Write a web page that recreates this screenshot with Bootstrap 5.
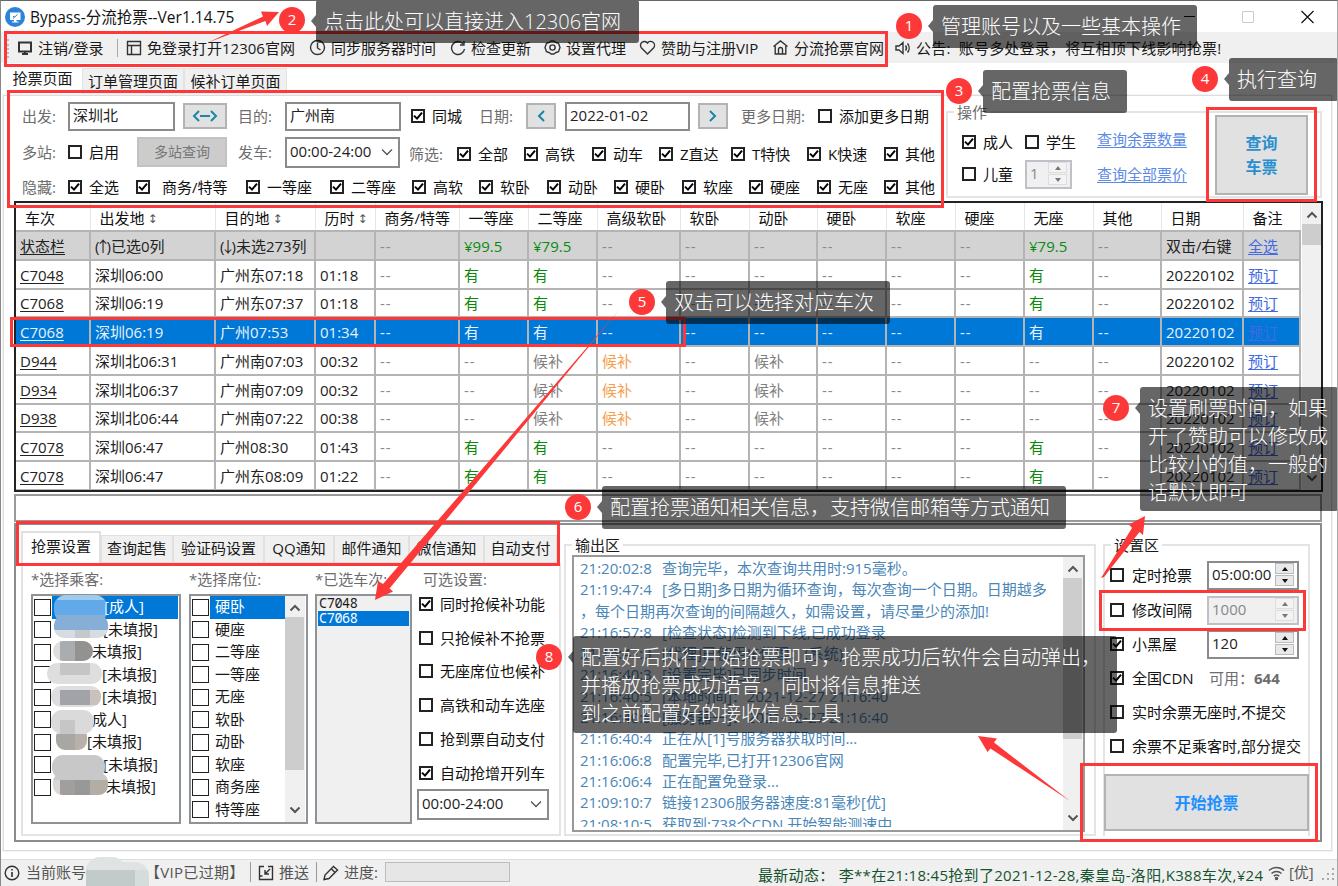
<!DOCTYPE html>
<html lang="zh-CN">
<head>
<meta charset="utf-8">
<meta name="viewport" content="width=device-width, initial-scale=1">
<title>Bypass-分流抢票</title>
<link href="https://cdn.jsdelivr.net/npm/bootstrap@5.3.0/dist/css/bootstrap.min.css" rel="stylesheet">
<style>
:root{--red:#fd3838;--line:#dcdcdc;--face:#f0f0f0}
body{margin:0;background:#fff;font:15px/20px "Open Sans","Noto Sans CJK SC",sans-serif;color:#1a1a1a;overflow:hidden}
.win{width:1338px;height:886px;border-top:1px solid #666;border-left:1px solid #888;border-right:1px solid #aaa;box-sizing:border-box;overflow:hidden;white-space:nowrap}
svg{display:block;flex:none}
.ic{fill:none;stroke:#333;stroke-width:1.4}
.gray{color:#6d6d6d}
/* title and tool bars */
.titlebar{height:31px;padding-left:4px;color:#111}
.titlebar .cap{padding-left:5px;font-size:15.5px}
.winctl{margin-right:18px}
.toolstrip{height:31px;background:var(--face);margin-bottom:1px;display:grid;grid-template-columns:109px 183px 141px 94px 95px 133px 123px 1fr;padding-left:16px;align-items:center;position:relative}
.toolstrip:before{content:"";position:absolute;left:6px;top:7px;bottom:5px;border-left:2px dotted #bbb}
.toolstrip>div{display:flex;align-items:center;gap:5px;height:28px}
.toolstrip>.notice{letter-spacing:.2px}
.toolstrip .sep{width:1px;height:18px;background:#aaa;margin-left:8px}
.tabline{height:31px;padding:4px 0 0 0}
.ttab{height:27px;line-height:24px;background:var(--face);border:1px solid #e2e2e2;text-align:center}
.ttab.on{background:#fff;border:0;line-height:20px;padding-left:2px}
.page{margin:0 5px 0 2px;height:756px;border:1px solid var(--line);outline:1px solid #f3f3f3;padding:0 9px 0 10px}
/* filter area */
.filters{height:105px}
.frows{width:934px;padding-left:8px}
.r1,.r2,.r3{display:grid;align-items:center}
.r1{height:40px;grid-template-columns:46px 115px 55px 47px 126px 68px 47px 39px 133px 43px 77px 120px}
.r2{height:32px;grid-template-columns:46px 69px 101px 47px 124px 48px 67px 68px 67px 72px 76px 77px 60px}
.r3{height:33px;padding-top:5px;grid-template-columns:46px 68px 110px 84px 82px 67px 68px 67px 68px 67px 68px 67px 60px}
.r2>.dn{padding-top:4px}
.ck{display:flex;align-items:center;gap:7px;color:#111}
.form-check-input{width:14px;height:14px;margin:0;border:2px solid #222;border-radius:0!important;background-color:#fff;flex:none}
.form-check-input:checked{background-color:#fff;border-color:#222;background-image:url("data:image/svg+xml,%3Csvg xmlns='http://www.w3.org/2000/svg' viewBox='0 0 10 10'%3E%3Cpath d='M1 4.6 4 7.6 9 1.6' fill='none' stroke='%23000' stroke-width='2'/%3E%3C/svg%3E");background-size:10px 10px}
.form-control{border:2px solid #8b8b8b;border-radius:0;padding:0 3px 3px;height:29px;line-height:22px;font-size:15px;color:#222}
.btn-face{background:#e1e1e1;border:2px solid #b3b3b3;border-radius:0;padding:0;display:flex;align-items:center;justify-content:center;font-size:15px;line-height:20px}
.combo{display:flex;justify-content:space-between;align-items:center;height:31px;padding-right:5px}
.combo svg{margin-top:3px}
.w106{width:107px}.w116{width:116px}.w125{width:125px}.w114{width:115px}
.b44{width:44px;height:26px}.b30{width:30px;height:26px}.b90{width:90px;height:30px;background:#ccc;border-color:#c2c2c2;color:#777;font-size:14px}
/* group boxes */
.gbox{border:2px solid #e4e4e4;position:relative}
.gbox>.cap{position:absolute;top:-11px;left:6px;background:#fff;padding:0 3px;line-height:20px}
.ops{width:376px;height:87px;margin-top:15px;padding:14px 0 0 14px}
.opsg{display:grid;grid-template-columns:63px 72px 118px;grid-template-rows:30px 34px;align-items:center}
.opsg a,.grid a{color:#4169e1;text-underline-offset:2px}
.opsg a{color:#5c8ae6;padding-bottom:6px}
.opsg a:last-child{padding-bottom:0}
.spin{display:flex;justify-content:space-between;align-items:center;padding-right:3px}
.spin.off{background:var(--face);color:#888;border-color:#c0c0c8}
.ud{display:flex;flex-direction:column;gap:1px;padding-top:2px}
.ud i{width:19px;height:11px;background:#e9e9e9;border:1px solid #bbb;display:flex;align-items:center;justify-content:center}
.ud i:before{content:"";border:3px solid transparent;border-bottom:4px solid #111;border-top:0}
.ud i:last-child:before{border-top:4px solid #111;border-bottom:0}
.off .ud i:before{border-bottom-color:#777}.off .ud i:last-child:before{border-top-color:#777}
.off .ud i{background:#f3f3f3;border-color:#ddd}
.bq{width:94px;height:80px;margin:-12px 12px 0 0;color:#2a8fd0;font-weight:700;font-size:16px;line-height:24px}
/* train grid */
.gridbox{height:291px;width:1309px;border:2px solid #222;outline:0;display:flex;overflow:hidden}
.grid{table-layout:fixed;border-collapse:collapse;width:1284px;margin:0 1px 0 0;height:286px}
.grid th{font-weight:400;padding:2px 0 0 9px;border-right:1px solid #e5e5e5;border-bottom:2px solid #b4b4b4;color:#111;overflow:hidden}
.grid td{padding:0 0 0 4px;border-right:2px solid #b4b4b4;border-bottom:2px solid #b4b4b4;color:#222;overflow:hidden;line-height:20px}
.grid thead tr{height:28px}.grid tbody tr{height:29px}.grid tbody tr.s{height:28px}
.grid tr.state td{background:#d3d3d3}
.grid tr.pick td{background:#0078d7;color:#e8f2fb}
.grid .nil{color:#8a8a8a;letter-spacing:1px}.grid .have{color:#0a8a0a}.grid .wait{color:#808080}.grid .hot{color:#f4a050}
.grid .pick .nil,.grid .pick .have{color:#e8f2fb}
.grid td:first-child{text-decoration:underline;text-underline-offset:2px}
.grid .arr{font:12px/12px "DejaVu Sans",sans-serif;color:#555;margin-left:-1px;position:relative;top:-1px}
.grid .ua{margin:0 -4px}
.sb{background:var(--face);width:20px;display:flex;flex-direction:column;align-items:center;justify-content:space-between;padding:8px 0;flex:none;position:relative}
.sb:before{content:"";position:absolute;left:0;right:1px;background:#cdcdcd}
.sbg:before{top:21px;height:21px}.sbl:before{top:21px;height:153px}.sbo:before{top:21px;height:161px}
.memo{height:28px;width:1308px;border:2px solid #999;margin-top:2px}
.lower{height:319px;width:1308px;border:2px solid #8c8c8c;margin-top:1px;padding-left:5px;display:flex}
/* lower tabs */
.conf{width:540px;padding-top:7px}
.conf .strip{height:31px;display:flex;align-items:flex-end}
.conf .strip>div{height:28px;line-height:25px;background:var(--face);border:1px solid #e0e0e0;text-align:center;flex:none}
.conf .strip>.on{height:32px;background:#fff;border:2px solid #e0e0e0;border-bottom:0;line-height:26px}
.confbody{height:273px;border:2px solid #e4e4e4;padding:4px 0 0 8px;display:grid;grid-template-columns:158px 126px 103px 138px}
.confbody .h{height:25px;color:#6d6d6d}
.lst{border:2px solid #8f9297;height:230px;padding:0 1px;position:relative}
.l1{width:150px}.l2{width:119px;display:flex}.l3{width:97px;background:var(--face);font:13.5px/15px "Noto Sans Mono","Liberation Sans",sans-serif}
.li{height:22.5px;display:flex;align-items:center}
.li .form-check-input{width:17px;height:17px;border-width:1.5px}
.li span{height:22.5px;line-height:20px;flex:1;margin-left:1px;padding-left:5px}
.li.on span{background:#0078d7;color:#fff}
.l3 div{padding-left:1px;letter-spacing:-.4px}
.l3 .on{background:#0078d7;color:#fff}
.opt{padding-left:1px}
.opt .h{padding-left:4px;height:18px}
.opt .ck{height:33.8px}
.opt .combo{width:132px;margin:-1px 0 0 -2px}
.out{width:532px;height:292px;margin:19px 0 0 3px;padding:9px 0 0 6px}
.log{width:513px;height:277px;border:2px solid #999;display:flex}
.logtx{flex:1;padding:1px 0 0 6px;overflow:hidden;height:270px}
.logtx div{height:21.3px;line-height:21.3px;color:#4a86b8;display:grid;grid-template-columns:82px 1fr}
.logtx div.full{display:block}
.setg{width:207px;height:292px;margin:19px 0 0 7px;padding:11px 0 0 5px;border-bottom:0}
.sr{display:grid;grid-template-columns:97px 92px;height:34px;align-items:center;white-space:nowrap}
.sr.first{height:36px}
.setg .ck{gap:8px}
.go{width:205px;height:57px;color:#1e90ff;font-weight:700;font-size:16px;margin:11px 0 0 -6px;position:relative}
/* status bar */
.status{height:27px;margin-top:8px;background:var(--face);border-top:1px solid #ddd;color:#555;display:flex;align-items:center;padding-left:3px}
.status .sep{width:1px;height:20px;background:#999}
.status>span{margin-top:-2px}
.prog{width:125px;height:20px;background:#e6e6e6;border:1px solid #bcbcbc;margin:-2px 0 0 7px}
.status .news{color:#14532d;margin:4px 4px 0 248px;width:506px;letter-spacing:.31px}
/* annotation layer */
.note,.pin,.frame,.ink,.blur{position:absolute}
.frame{border:3px solid var(--red)}
.pin{width:26px;height:26px;border-radius:50%;background:var(--red);color:#fff;text-align:center;line-height:24px;font-size:15px}
.note{background:rgba(0,0,0,.6);color:#fff;border-radius:3px;font-size:20px;line-height:28px;padding:8px 0 0 8px;height:43px;white-space:nowrap;font-weight:300}
.note:before{content:"";position:absolute;left:-5px;border:6px solid transparent;border-right:5px solid rgba(0,0,0,.6);border-left:0;top:15px}
</style>
</head>
<body>
<div class="win position-relative">
  <header class="titlebar d-flex align-items-center">
    <svg width="20" height="20" viewBox="0 0 20 20"><circle cx="10" cy="10" r="10" fill="#2d83d5"/><path d="M5 5.500h10.500v7.500H5z" fill="#fff"/><path d="M9 13h2.500v1.500h2v1h-6.500v-1h2z" fill="#fff"/><path d="m8 11.500 4.500-4M8 9.500h1.500" stroke="#2d83d5" fill="none"/></svg>
    <span class="cap">Bypass-分流抢票--Ver1.14.75</span>
    <svg class="ms-auto winctl" width="140" height="16" viewBox="0 0 140 16"><path d="M5 7.500h11" stroke="#111"/><path d="M63.500 2.500h11v11h-11z" fill="none" stroke="#ccc"/><path d="m122.500 2 12 12m0-12-12 12" stroke="#111" stroke-width="1.2"/></svg>
  </header>
  <nav class="toolstrip">
    <div><svg width="16" height="16" class="ic"><path d="M2 2.500h12v9H2zM5 14h6M8 11.500V14" stroke-width="2"/></svg>注销/登录<span class="sep"></span></div>
    <div><svg width="16" height="16" class="ic"><path d="M1.500 1.500h13v13h-13zM1.500 5.500h13M5.500 5.500v9"/></svg>免登录打开12306官网</div>
    <div><svg width="17" height="17" class="ic"><circle cx="8.500" cy="8.500" r="7"/><path d="M8.500 4v5l3 2"/></svg>同步服务器时间</div>
    <div><svg width="16" height="16" class="ic"><path d="M13 3.800A6.500 6.500 0 1 0 14.500 9M14 1v4h-4"/></svg>检查更新</div>
    <div><svg width="17" height="17" class="ic" viewBox="0 0 17 17"><path d="M5 3.500 7.200 2h2.600L12 3.500l2.500.8 1.500 4.200-1.500 4.200-2.500.8L9.800 15H7.200L5 13.500l-2.500-.8L1 8.500l1.500-4.200z"/><circle cx="8.500" cy="8.500" r="2.600"/></svg>设置代理</div>
    <div><svg width="17" height="17" class="ic"><path d="M8.500 15 2.300 8.800A3.800 3.800 0 0 1 8.500 4a3.800 3.800 0 0 1 6.200 4.800z"/></svg>赞助与注册VIP</div>
    <div><svg width="17" height="17" class="ic"><path d="m1.500 7.500 7-5.500 7 5.500M3.200 7v8h10.600V7M6.500 15v-4.500a2 2 0 0 1 4 0V15"/></svg>分流抢票官网</div>
    <div class="notice"><svg width="16" height="16" class="ic"><path d="M1 6h3l4-3.500v11L4 10H1zM10.500 5.500a4 4 0 0 1 0 5M12.500 3.500a7 7 0 0 1 0 9"/></svg>公告:&nbsp; 账号多处登录，将互相顶下线影响抢票!</div>
  </nav>
  <div class="tabline d-flex">
    <div class="ttab on" style="width:81px">抢票页面</div><div class="ttab" style="width:102px">订单管理页面</div><div class="ttab" style="width:103px">候补订单页面</div>
  </div>

  <main class="page">
    <section class="filters d-flex">
      <div class="frows">
        <div class="r1">
          <span class="gray">出发:</span><div class="form-control w106">深圳北</div>
          <button class="btn btn-face b44"><svg width="26" height="14" fill="none" stroke="#1a86a8" stroke-width="2"><path d="M7 2 2 7l5 5M19 2l5 5-5 5M8 7h10"/></svg></button>
          <span class="gray">目的:</span><div class="form-control w116">广州南</div>
          <label class="ck"><input type="checkbox" class="form-check-input" checked>同城</label>
          <span class="gray">日期:</span>
          <button class="btn btn-face b30"><svg width="10" height="14" fill="none" stroke="#1a86a8" stroke-width="2"><path d="M8 2 3 7l5 5"/></svg></button>
          <div class="form-control w125">2022-01-02</div>
          <button class="btn btn-face b30"><svg width="10" height="14" fill="none" stroke="#1a86a8" stroke-width="2"><path d="m2 2 5 5-5 5"/></svg></button>
          <span class="gray">更多日期:</span><label class="ck"><input type="checkbox" class="form-check-input">添加更多日期</label>
        </div>
        <div class="r2">
          <span class="gray">多站:</span><label class="ck"><input type="checkbox" class="form-check-input">启用</label>
          <button class="btn btn-face b90">多站查询</button>
          <span class="gray">发车:</span><div class="form-control combo w114">00:00-24:00<svg width="12" height="8" fill="none" stroke="#555" stroke-width="1.300"><path d="m1 1.500 5 5 5-5"/></svg></div>
          <span class="gray dn">筛选:</span>
          <label class="ck dn"><input type="checkbox" class="form-check-input" checked>全部</label>
          <label class="ck dn"><input type="checkbox" class="form-check-input" checked>高铁</label>
          <label class="ck dn"><input type="checkbox" class="form-check-input" checked>动车</label>
          <label class="ck dn"><input type="checkbox" class="form-check-input" checked>Z直达</label>
          <label class="ck dn"><input type="checkbox" class="form-check-input" checked>T特快</label>
          <label class="ck dn"><input type="checkbox" class="form-check-input" checked>K快速</label>
          <label class="ck dn"><input type="checkbox" class="form-check-input" checked>其他</label>
        </div>
        <div class="r3">
          <span class="gray">隐藏:</span>
          <label class="ck"><input type="checkbox" class="form-check-input" checked>全选</label>
          <label class="ck" style="gap:12px"><input type="checkbox" class="form-check-input" checked>商务/特等</label>
          <label class="ck"><input type="checkbox" class="form-check-input" checked>一等座</label>
          <label class="ck"><input type="checkbox" class="form-check-input" checked>二等座</label>
          <label class="ck"><input type="checkbox" class="form-check-input" checked>高软</label>
          <label class="ck"><input type="checkbox" class="form-check-input" checked>软卧</label>
          <label class="ck"><input type="checkbox" class="form-check-input" checked>动卧</label>
          <label class="ck"><input type="checkbox" class="form-check-input" checked>硬卧</label>
          <label class="ck"><input type="checkbox" class="form-check-input" checked>软座</label>
          <label class="ck"><input type="checkbox" class="form-check-input" checked>硬座</label>
          <label class="ck"><input type="checkbox" class="form-check-input" checked>无座</label>
          <label class="ck"><input type="checkbox" class="form-check-input" checked>其他</label>
        </div>
      </div>
      <div class="gbox ops d-flex justify-content-between flex-shrink-0">
        <span class="cap gray">操作</span>
        <div class="opsg">
          <label class="ck"><input type="checkbox" class="form-check-input" checked>成人</label>
          <label class="ck"><input type="checkbox" class="form-check-input">学生</label>
          <a href="#">查询余票数量</a>
          <label class="ck"><input type="checkbox" class="form-check-input">儿童</label>
          <div class="form-control spin off" style="width:47px">1<span class="ud"><i></i><i></i></span></div>
          <a href="#">查询全部票价</a>
        </div>
        <button class="btn btn-face bq">查询<br>车票</button>
      </div>
    </section>

    <section class="gridbox">
      <table class="grid">
        <colgroup id="cols"></colgroup>
        <thead><tr id="head"></tr></thead>
        <tbody id="rows"></tbody>
      </table>
      <div class="sb sbg"><svg width="12" height="8" fill="none" stroke="#555" stroke-width="2"><path d="m1.500 6.500 4.500-4.500 4.500 4.500"/></svg><svg width="12" height="8" fill="none" stroke="#555" stroke-width="2"><path d="m1.500 1.500 4.500 4.500 4.500-4.500"/></svg></div>
    </section>
    <div class="memo"></div>

    <section class="lower">
      <div class="conf">
        <div class="strip">
          <div class="on" style="width:80px">抢票设置</div><div style="width:72px">查询起售</div><div style="width:91px">验证码设置</div><div style="width:70px">QQ通知</div><div style="width:75px">邮件通知</div><div style="width:75px">微信通知</div><div style="width:73px">自动支付</div>
        </div>
        <div class="confbody">
          <div><div class="h">*选择乘客:</div>
            <div class="lst l1" id="pax"></div>
          </div>
          <div><div class="h">*选择席位:</div>
            <div class="lst l2"><div class="flex-fill" id="seats"></div>
              <div class="sb sbl"><svg width="12" height="8" fill="none" stroke="#555" stroke-width="2"><path d="m1.500 6.500 4.500-4.500 4.500 4.500"/></svg><svg width="12" height="8" fill="none" stroke="#555" stroke-width="2"><path d="m1.500 1.500 4.500 4.500 4.500-4.500"/></svg></div></div>
          </div>
          <div><div class="h">*已选车次:</div><div class="lst l3"><div>C7048</div><div class="on">C7068</div></div></div>
          <div class="opt"><div class="h">可选设置:</div>
            <label class="ck"><input type="checkbox" class="form-check-input" checked>同时抢候补功能</label>
            <label class="ck"><input type="checkbox" class="form-check-input">只抢候补不抢票</label>
            <label class="ck"><input type="checkbox" class="form-check-input">无座席位也候补</label>
            <label class="ck"><input type="checkbox" class="form-check-input">高铁和动车选座</label>
            <label class="ck"><input type="checkbox" class="form-check-input">抢到票自动支付</label>
            <label class="ck"><input type="checkbox" class="form-check-input" checked>自动抢增开列车</label>
            <div class="form-control combo">00:00-24:00<svg width="12" height="8" fill="none" stroke="#555" stroke-width="1.300"><path d="m1 1.500 5 5 5-5"/></svg></div>
          </div>
        </div>
      </div>
      <div class="gbox out"><span class="cap">输出区</span>
        <div class="log">
          <div class="logtx">
            <div><span>21:20:02:8</span><span>查询完毕，本次查询共用时:915毫秒。</span></div>
            <div><span>21:19:47:4</span><span>[多日期]多日期为循环查询，每次查询一个日期。日期越多</span></div>
            <div class="full">，每个日期再次查询的间隔越久，如需设置，请尽量少的添加!</div>
            <div><span>21:16:57:8</span><span>[检查状态]检测到下线,已成功登录</span></div>
            <div><span>21:16:47:3</span><span>[代理]已使用IE代理：(系统)</span></div>
            <div><span>21:16:40:3</span><span>[设置完毕]已同步时间</span></div>
            <div><span>21:16:40:5</span><span>[本地时间]：2021-12-27 21:16:40</span></div>
            <div><span>21:16:40:5</span><span>[服务器一]：2021-12-27 21:16:40</span></div>
            <div><span>21:16:40:4</span><span>正在从[1]号服务器获取时间...</span></div>
            <div><span>21:16:06:8</span><span>配置完毕,已打开12306官网</span></div>
            <div><span>21:16:06:4</span><span>正在配置免登录...</span></div>
            <div><span>21:09:10:7</span><span>链接12306服务器速度:81毫秒[优]</span></div>
            <div><span>21:08:10:5</span><span>获取到:738个CDN,开始智能测速中</span></div>
          </div>
          <div class="sb sbo"><svg width="12" height="8" fill="none" stroke="#555" stroke-width="2"><path d="m1.500 6.500 4.500-4.500 4.500 4.500"/></svg><svg width="12" height="8" fill="none" stroke="#555" stroke-width="2"><path d="m1.500 1.500 4.500 4.500 4.500-4.500"/></svg></div>
        </div>
      </div>
      <div class="gbox setg"><span class="cap">设置区</span>
        <div class="sr first"><label class="ck"><input type="checkbox" class="form-check-input">定时抢票</label><div class="form-control spin">05:00:00<span class="ud"><i></i><i></i></span></div></div>
        <div class="sr"><label class="ck"><input type="checkbox" class="form-check-input">修改间隔</label><div class="form-control spin off">1000<span class="ud"><i></i><i></i></span></div></div>
        <div class="sr"><label class="ck"><input type="checkbox" class="form-check-input" checked>小黑屋</label><div class="form-control spin">120<span class="ud"><i></i><i></i></span></div></div>
        <div class="sr"><label class="ck"><input type="checkbox" class="form-check-input" checked>全国CDN</label><span class="gray" style="padding-left:2px">可用：<b>644</b></span></div>
        <div class="sr"><label class="ck"><input type="checkbox" class="form-check-input">实时余票无座时,不提交</label></div>
        <div class="sr"><label class="ck"><input type="checkbox" class="form-check-input">余票不足乘客时,部分提交</label></div>
        <button class="btn btn-face go">开始抢票</button>
      </div>
    </section>
  </main>

  <footer class="status">
    <svg width="16" height="16" class="ic"><circle cx="8" cy="8" r="6.800"/><path d="M8 4v1.500M8 7v5" stroke-width="1.600"/></svg>
    <span style="width:125px;padding-left:6px">当前账号</span><span style="width:105px;letter-spacing:.3px">【VIP已过期】</span><span class="sep"></span>
    <svg width="16" height="16" class="ic" style="margin-left:7px"><path d="M6 1.500H1.500v13h13v-13H10M1.500 11h3M12 4 7.500 8.500M7 5v4h4"/></svg>
    <span style="width:42px;padding-left:5px">推送</span><span class="sep"></span>
    <svg width="18" height="18" class="ic" style="margin-left:5px"><path d="m2 15.500 1-4.500L11.500 2.500l4 3.500L7 14.500zM9.500 5l3.500 3.500"/></svg>
    <span style="padding-left:4px">进度:</span><div class="prog"></div>
    <span class="news">最新动态： 李**在21:18:45抢到了2021-12-28,秦皇岛-洛阳,K388车次,¥24</span>
    <svg width="17" height="16" fill="none" stroke="#555" stroke-width="1.500"><path d="M1 5.500a11 11 0 0 1 15 0M3.500 8.500a7.500 7.500 0 0 1 10 0M5.800 11.200a4 4 0 0 1 5.400 0"/><circle cx="8.500" cy="13.500" r="1" fill="#555"/></svg>
    <span style="padding-left:4px">[优]</span>
    <svg width="14" height="14" style="margin:4px 0 0 8px" fill="#aaa"><path d="M10 0h2v2h-2zM5 5h2v2H5zM10 5h2v2h-2zM0 10h2v2H0zM5 10h2v2H5zM10 10h2v2h-2z"/></svg>
  </footer>

  <!-- pixelated patches over private names -->
  <svg class="blur" style="left:-1px;top:-1px" width="200" height="886">
    <defs>
      <clipPath id="m1"><rect x="54" y="595" width="53" height="28" rx="12"/><rect x="54" y="615" width="54" height="23" rx="10"/></clipPath>
      <clipPath id="m2"><rect x="53" y="641" width="40" height="20" rx="10"/><rect x="47" y="663" width="55" height="21" rx="10"/><rect x="51" y="686" width="50" height="21" rx="10"/></clipPath>
      <clipPath id="m3"><rect x="51" y="710" width="43" height="24" rx="11"/><rect x="56" y="728" width="31" height="22" rx="9"/></clipPath>
      <clipPath id="m4"><rect x="52" y="755" width="53" height="24" rx="11"/><rect x="53" y="773" width="55" height="22" rx="9"/></clipPath>
      <clipPath id="m5"><rect x="86" y="857" width="40" height="40" rx="14"/><rect x="86" y="862" width="63" height="40" rx="14"/></clipPath>
    </defs>
    <g clip-path="url(#m1)"><path fill="#9ecbf0" d="M50 595h60v10H50z"/><path fill="#62a9e9" d="M50 600h55v15H50z"/><path fill="#86aed6" d="M50 615h60v15H50z"/><path fill="#d5dde2" d="M50 630h60v10H50z"/><path fill="#c6c9ca" d="M75 630h15v10H75z"/></g>
    <g clip-path="url(#m2)"><path fill="#dedede" d="M45 640h60v70H45z"/><path fill="#a9adb0" d="M60 640h15v21H60z"/><path fill="#929290" d="M75 640h20v21H75z"/><path fill="#c5c5c5" d="M60 663h30v12H60z"/><path fill="#a2a3a8" d="M60 690h30v15H60z"/><path fill="#c9c1bb" d="M90 690h15v15H90z"/></g>
    <g clip-path="url(#m3)"><path fill="#dadada" d="M45 705h60v30H45z"/><path fill="#a9a7a4" d="M45 734h30v20H45z"/><path fill="#b8b0a9" d="M75 734h30v20H75z"/><path fill="#c6c6c6" d="M60 720h15v14H60z"/></g>
    <g clip-path="url(#m4)"><path fill="#c8c8c8" d="M45 750h70v30H45z"/><path fill="#a19e9b" d="M60 780h15v20H60z"/><path fill="#989898" d="M75 780h15v20H75z"/><path fill="#b3ada5" d="M90 780h20v20H90z"/><path fill="#dad7d4" d="M45 780h15v20H45z"/></g>
    <g clip-path="url(#m5)"><path fill="#dfe3e3" d="M80 855h80v15H80z"/><path fill="#c2caca" d="M80 870h55v20H80z"/><path fill="#d5dcdc" d="M135 870h20v20h-20z"/></g>
  </svg>

  <!-- tutorial annotations -->
  <div id="marks"></div>
  <svg class="ink" style="left:-1px;top:-1px;pointer-events:none" width="1338" height="886" fill="#fd3838">
    <path d="M208 42.500 263 16.500 261 11.500 279 12 267 26 265.500 21z"/>
    <path d="M620 309 383 584 378 581 375 600 393 591.500 389.500 588.500z"/>
    <path d="M1101 578 1132 528 1129 524.500 1145 516 1143 535 1139.500 532 1104 577z"/>
    <path d="M1070 801 994 742.500 997 738.500 978 736 987.500 752 990.500 748.500z"/>
  </svg>
</div>
<script>
const $ = id => document.getElementById(id);
const widths = [74,125,100,60,84,69,69,83,69,68,69,69,69,69,68,82,57];
$('cols').innerHTML = widths.map(w => `<col style="width:${w}px">`).join('');
const up = '<span class="arr">↕</span>';
$('head').innerHTML = ['车次','出发地 '+up,'目的地 '+up,'历时 '+up,'商务/特等','一等座','二等座','高级软卧','软卧','动卧','硬卧','软座','硬座','无座','其他','日期','备注'].map(t => `<th>${t}</th>`).join('');
const N = '--', Y = '有', H = '候补';
const train = (no, from, to, t, kind) => kind === 'w'
  ? [no, from, to, t, N, N, H, '*'+H, N, H, N, N, N, N, N, '20220102', '预订']
  : [no, from, to, t, N, Y, Y, N, N, N, N, N, N, Y, N, '20220102', '预订'];
const rows = [
  ['状态栏','(<span class="ua">↑</span>)已选0列','(<span class="ua">↓</span>)未选273列','',N,'¥99.5','¥79.5',N,N,N,N,N,N,'¥79.5',N,'双击/右键','全选'],
  train('C7048','深圳06:00','广州东07:18','01:18'),
  train('C7068','深圳06:19','广州东07:37','01:18'),
  train('C7068','深圳06:19','广州07:53','01:34'),
  train('D944','深圳北06:31','广州南07:03','00:32','w'),
  train('D934','深圳北06:37','广州南07:09','00:32','w'),
  train('D938','深圳北06:44','广州南07:22','00:38','w'),
  train('C7078','深圳06:47','广州08:30','01:43'),
  train('C7078','深圳06:47','广州东08:09','01:22')
];
const cls = v => v === N ? 'nil' : v === Y || v[0] === '¥' ? 'have' : v[0] === '*' ? 'hot' : v === H ? 'wait' : '';
$('rows').innerHTML = rows.map((r, i) => `<tr class="${i === 0 ? 'state' : i === 3 ? 'pick' : ''} ${i === 2 || i === 6 ? 's' : ''}">` +
  r.map((v, c) => c === 16 ? `<td><a href="#">${v}</a></td>` : `<td class="${cls(v)}">${v.replace('*', '')}</td>`).join('') + '</tr>').join('');
// the padding is the room that the masked name takes
$('pax').innerHTML = [['[成人]',52],['[未填报]',51],['未填报]',40],['[未填报]',50],['[未填报]',50],['成人]',40],['[未填报]',35],['[未填报]',51],['未填报]',54]].map(([t, p], i) =>
  `<div class="li ${i ? '' : 'on'}"><input type="checkbox" class="form-check-input"><span style="padding-left:${p}px">${t}</span></div>`).join('');
$('seats').innerHTML = ['硬卧','硬座','二等座','一等座','无座','软卧','动卧','软座','商务座','特等座'].map((t, i) =>
  `<div class="li ${i ? '' : 'on'}"><input type="checkbox" class="form-check-input"><span>${t}</span></div>`).join('');
const px = (x, y, w, h) => `left:${x - 1}px;top:${y - 1}px;` + (w ? `width:${w}px;height:${h}px` : '');
const frames = [[4,31,884,36],[7,90,937,118],[1206,107,111,95],[10,317,676,30],[16,521,544,45],[1099,590,207,41],[1080,763,238,79]];
const notes = [
  [909,26,933,5,264,43,'管理账号以及一些基本操作'],
  [292,20,316,0,323,43,'点击此处可以直接进入12306官网'],
  [959,91,983,70,144,43,'配置抢票信息'],
  [1205,79,1229,58,109,43,'执行查询'],
  [642,302,666,281,224,43,'双击可以选择对应车次'],
  [578,507,602,486,464,43,'配置抢票通知相关信息，支持微信邮箱等方式通知'],
  [1116,408,1140,387,198,124,'设置刷票时间，如果<br>开了赞助可以修改成<br>比较小的值，一般的<br>话默认即可'],
  [549,657,573,636,544,97,'配置好后执行开始抢票即可，抢票成功后软件会自动弹出，<br>并播放抢票成功语音，同时将信息推送<br>到之前配置好的接收信息工具']
];
$('marks').innerHTML = frames.map(f => `<div class="frame" style="${px(...f)}"></div>`).join('') +
  notes.map((n, i) => `<div class="pin" style="${px(n[0] - 13, n[1] - 13)}">${i + 1}</div><div class="note" style="${px(...n.slice(2, 6))}">${n[6]}</div>`).join('');
</script>
<script src="https://cdn.jsdelivr.net/npm/bootstrap@5.3.0/dist/js/bootstrap.bundle.min.js"></script>
</body>
</html>
